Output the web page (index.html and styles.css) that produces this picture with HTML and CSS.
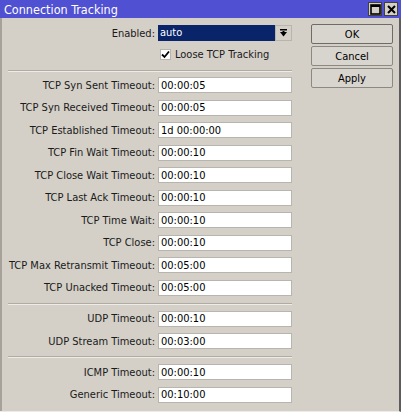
FILE: index.html
```html
<!DOCTYPE html>
<html lang="en">
<head>
    <meta charset="UTF-8">
    <title>Connection Tracking</title>
    <link rel="stylesheet" href="styles.css">
</head>
<body>

<div class="window">
    <div class="titlebar">
        <span class="title">Connection Tracking</span>
        <div class="controls">
            <span class="ctrl">
                <svg width="11" height="11" viewBox="0 0 11 11"><rect x="1" y="1" width="9" height="9" fill="none" stroke="#000" stroke-width="1.6"/><rect x="1" y="1" width="9" height="2" fill="#000"/></svg>
            </span>
            <span class="ctrl">
                <svg width="11" height="11" viewBox="0 0 11 11"><path d="M2 2 L9 9 M9 2 L2 9" stroke="#000" stroke-width="2"/></svg>
            </span>
        </div>
    </div>

    <div class="content">
        <div class="form">
            <div class="row">
                <label>Enabled:</label>
                <div class="select">
                    <span class="select-value">auto</span>
                    <span class="select-arrow">
                        <svg width="9" height="9" viewBox="0 0 9 9"><rect x="1" y="0" width="7" height="1.5" fill="#000"/><path d="M1 3 H8 L4.5 7.5 Z" fill="#000"/><rect x="3.5" y="2" width="2" height="2" fill="#000"/></svg>
                    </span>
                </div>
            </div>
            <div class="row check-row">
                <span></span>
                <label class="check">
                    <span class="box">
                        <svg width="9" height="9" viewBox="0 0 9 9"><path d="M1 4.5 L3.5 7 L8 1.5" fill="none" stroke="#000" stroke-width="1.8"/></svg>
                    </span>
                    Loose TCP Tracking
                </label>
            </div>

            <div class="sep"></div>

            <div class="group">
                <div class="row"><label>TCP Syn Sent Timeout:</label><input type="text" value="00:00:05"></div>
                <div class="row"><label>TCP Syn Received Timeout:</label><input type="text" value="00:00:05"></div>
                <div class="row"><label>TCP Established Timeout:</label><input type="text" value="1d 00:00:00"></div>
                <div class="row"><label>TCP Fin Wait Timeout:</label><input type="text" value="00:00:10"></div>
                <div class="row"><label>TCP Close Wait Timeout:</label><input type="text" value="00:00:10"></div>
                <div class="row"><label>TCP Last Ack Timeout:</label><input type="text" value="00:00:10"></div>
                <div class="row"><label>TCP Time Wait:</label><input type="text" value="00:00:10"></div>
                <div class="row"><label>TCP Close:</label><input type="text" value="00:00:10"></div>
                <div class="row"><label>TCP Max Retransmit Timeout:</label><input type="text" value="00:05:00"></div>
                <div class="row"><label>TCP Unacked Timeout:</label><input type="text" value="00:05:00"></div>
            </div>

            <div class="sep"></div>

            <div class="group">
                <div class="row"><label>UDP Timeout:</label><input type="text" value="00:00:10"></div>
                <div class="row"><label>UDP Stream Timeout:</label><input type="text" value="00:03:00"></div>
            </div>

            <div class="sep"></div>

            <div class="group">
                <div class="row"><label>ICMP Timeout:</label><input type="text" value="00:00:10"></div>
                <div class="row"><label>Generic Timeout:</label><input type="text" value="00:10:00"></div>
            </div>
        </div>

        <div class="buttons">
            <button class="btn default">OK</button>
            <button class="btn">Cancel</button>
            <button class="btn">Apply</button>
        </div>
    </div>
</div>

</body>
</html>
```

FILE: styles.css
```css
body {
    margin: 0;
    font-family: "DejaVu Sans Condensed", "DejaVu Sans", sans-serif;
    font-size: 11px;
    color: #1a1a1a;
    background-color: #d4d0c8;
    width: 401px;
    height: 412px;
    overflow: hidden;
}

.window {
    height: 412px;
    box-sizing: border-box;
    background-color: #d4d0c8;
    border-right: 2px solid #5c5c5c;
    border-bottom: 1px solid #ecebe8;
    display: flex;
    flex-direction: column;
}

/* Title bar */
.titlebar {
    height: 18px;
    background-color: #5050d2;
    display: flex;
    align-items: center;
    justify-content: space-between;
    padding-left: 4px;
    margin-right: -2px;
}
.title {
    color: #fff;
    font-size: 12.5px;
}
.controls {
    display: flex;
    gap: 2px;
    padding-right: 3px;
}
.ctrl {
    width: 14px;
    height: 14px;
    box-sizing: border-box;
    background-color: #d4d0c8;
    border: 1px solid #404040;
    display: flex;
    align-items: center;
    justify-content: center;
}

.content {
    flex: 1;
    display: flex;
    border-left: 2px solid #a6a29a;
}

/* Form */
.form {
    width: 284px;
    padding: 7px 0 0 6px;
    display: flex;
    flex-direction: column;
}
.group {
    display: flex;
    flex-direction: column;
    gap: 6.5px;
}
.row {
    display: grid;
    grid-template-columns: 147px 134px;
    column-gap: 3px;
    height: 16px;
    align-items: center;
}
.row label {
    text-align: right;
    white-space: nowrap;
}
.row input {
    height: 16px;
    box-sizing: border-box;
    border: 1px solid #b8b5ae;
    background-color: #fff;
    padding: 0 2px;
    font: inherit;
    color: #000;
    outline: none;
}

.select {
    display: flex;
    height: 16px;
}
.select-value {
    flex: 1;
    background-color: #0a246a;
    color: #fff;
    padding-left: 2px;
    line-height: 16px;
}
.select-arrow {
    width: 17px;
    box-sizing: border-box;
    border: 1px solid #b8b5ae;
    background-color: #d4d0c8;
    display: flex;
    align-items: center;
    justify-content: center;
}

.check-row {
    margin-top: 7px;
    height: 12px;
}
.check {
    display: flex;
    align-items: center;
    gap: 4px;
    text-align: left !important;
    padding-left: 2px;
}
.box {
    width: 11px;
    height: 11px;
    box-sizing: border-box;
    background-color: #fff;
    border: 1px solid #b8b5ae;
    display: flex;
    align-items: center;
    justify-content: center;
}

.sep {
    height: 0;
    border-top: 1px solid #b0aca4;
    border-bottom: 1px solid #eeece8;
    margin: 10px 0 5px 0;
}
.group + .sep {
    margin: 7px 0 6px 0;
}

/* Buttons */
.buttons {
    display: flex;
    flex-direction: column;
    gap: 2px;
    padding: 6px 0 0 19px;
}
.btn {
    width: 82px;
    height: 20px;
    font: inherit;
    background-color: #d8d5ce;
    border: 1px solid #8c8983;
    border-radius: 2px;
    padding: 0;
    color: #000;
}
.btn.default {
    border-color: #6f6c67;
}
```
